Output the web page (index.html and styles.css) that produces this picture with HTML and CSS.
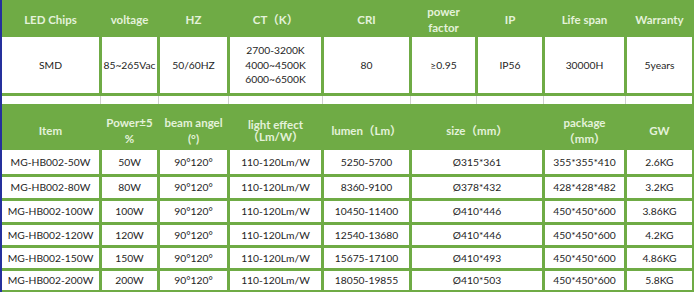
FILE: index.html
```html
<!DOCTYPE html>
<html>
<head>
<meta charset="utf-8">
<link rel="stylesheet" href="styles.css">
</head>
<body>
<div class="sheet">
  <div class="hd h1">LED Chips</div>
  <div class="hd h1">voltage</div>
  <div class="hd h1">HZ</div>
  <div class="hd h1">CT（K）</div>
  <div class="hd h1">CRI</div>
  <div class="hd h1 two">power<br>factor</div>
  <div class="hd h1">IP</div>
  <div class="hd h1">Life span</div>
  <div class="hd h1">Warranty</div>

  <div class="cell">SMD</div>
  <div class="cell">85~265Vac</div>
  <div class="cell">50/60HZ</div>
  <div class="cell ct">2700-3200K<br>4000~4500K<br>6000~6500K</div>
  <div class="cell">80</div>
  <div class="cell">≥0.95</div>
  <div class="cell">IP56</div>
  <div class="cell">30000H</div>
  <div class="cell">5years</div>

  <div class="thin">
    <span></span><span></span><span></span><span></span><span></span><span></span><span></span><span></span><span class="last"></span>
  </div>

  <div class="hd h2">Item</div>
  <div class="hd h2 two">Power±5<br>%</div>
  <div class="hd h2 two">beam angel<br>(°)</div>
  <div class="hd h2 tight">light effect<br>（Lm/W）</div>
  <div class="hd h2">lumen（Lm）</div>
  <div class="hd h2 wide">size（mm）</div>
  <div class="hd h2 two">package<br>（mm）</div>
  <div class="hd h2">GW</div>

  <div class="cell">MG-HB002-50W</div><div class="cell">50W</div><div class="cell">90°120°</div><div class="cell">110-120Lm/W</div><div class="cell">5250-5700</div><div class="cell wide">Ø315*361</div><div class="cell">355*355*410</div><div class="cell">2.6KG</div>
  <div class="cell">MG-HB002-80W</div><div class="cell">80W</div><div class="cell">90°120°</div><div class="cell">110-120Lm/W</div><div class="cell">8360-9100</div><div class="cell wide">Ø378*432</div><div class="cell">428*428*482</div><div class="cell">3.2KG</div>
  <div class="cell">MG-HB002-100W</div><div class="cell">100W</div><div class="cell">90°120°</div><div class="cell">110-120Lm/W</div><div class="cell">10450-11400</div><div class="cell wide">Ø410*446</div><div class="cell">450*450*600</div><div class="cell">3.86KG</div>
  <div class="cell">MG-HB002-120W</div><div class="cell">120W</div><div class="cell">90°120°</div><div class="cell">110-120Lm/W</div><div class="cell">12540-13680</div><div class="cell wide">Ø410*446</div><div class="cell">450*450*600</div><div class="cell">4.2KG</div>
  <div class="cell">MG-HB002-150W</div><div class="cell">150W</div><div class="cell">90°120°</div><div class="cell">110-120Lm/W</div><div class="cell">15675-17100</div><div class="cell wide">Ø410*493</div><div class="cell">450*450*600</div><div class="cell">4.86KG</div>
  <div class="cell">MG-HB002-200W</div><div class="cell">200W</div><div class="cell">90°120°</div><div class="cell">110-120Lm/W</div><div class="cell">18050-19855</div><div class="cell wide">Ø410*503</div><div class="cell">450*450*600</div><div class="cell">5.8KG</div>
</div>
</body>
</html>
```

FILE: styles.css
```css
html, body {
  margin: 0;
  padding: 0;
  background: #ffffff;
}

.sheet {
  width: 690px;
  height: 290px;
  display: grid;
  grid-template-columns: 97px 55px 67px 91px 85px 63px 64px 79px 65px;
  grid-template-rows: 34px 56px 8px 40px 24px 21px 21px 20px 20px 19px;
  gap: 3px;
  background: #6fab45;
  border-left: 2px solid #25309c;
  padding: 0 2px 2px 0;
  font-family: "Lato", "Noto Sans CJK SC", sans-serif;
}

.hd {
  display: flex;
  align-items: center;
  justify-content: center;
  text-align: center;
  color: #e4f2da;
  font-weight: 700;
  font-size: 11.5px;
  line-height: 15px;
}

.h1 {
  padding-top: 5px;
}

.h2 {
  padding-top: 7px;
}

.two {
  line-height: 16px;
}

.tight {
  line-height: 12px;
}

.wide {
  grid-column: span 2;
}

.cell {
  background: #ffffff;
  display: flex;
  align-items: center;
  justify-content: center;
  text-align: center;
  white-space: nowrap;
  color: #1e1e1e;
  font-size: 10.3px;
  line-height: 14.5px;
}

.thin {
  grid-column: 1 / -1;
  background: #ffffff;
  display: grid;
  grid-template-columns: 97px 55px 67px 91px 85px 63px 64px 79px 65px;
  column-gap: 3px;
}

.thin span {
  border-right: 1px solid #cfcfcf;
  margin-right: -2px;
}

.thin span.last {
  border-right: none;
  margin-right: 0;
}
```
